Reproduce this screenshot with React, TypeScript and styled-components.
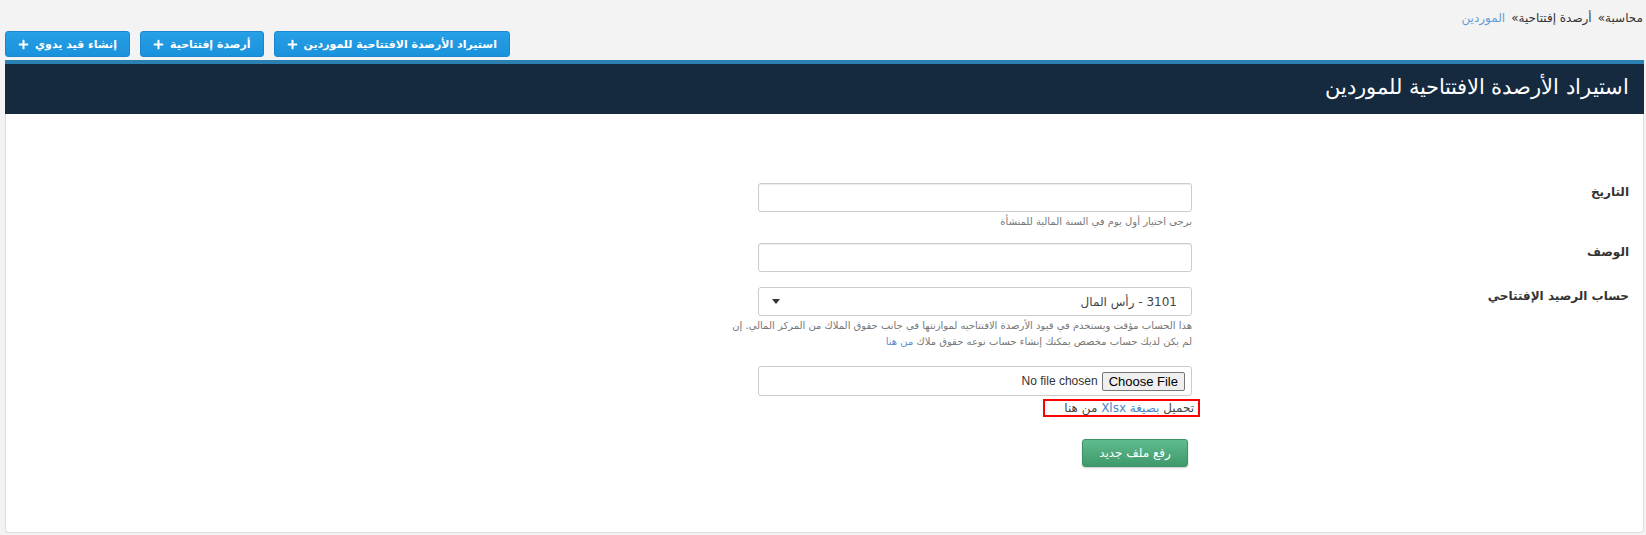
import styled, { createGlobalStyle } from "styled-components";
import { FaPlus } from "react-icons/fa";

const GlobalStyle = createGlobalStyle`
  html, body {
    margin: 0;
    padding: 0;
    background: #f3f3f3;
  }
  body {
    font-family: "DejaVu Sans", "Noto Sans", sans-serif;
    color: #333;
  }
`;

const Page = styled.div`
  direction: rtl;
  height: 535px;
  overflow: hidden;
  box-sizing: border-box;
`;

const Breadcrumb = styled.div`
  display: flex;
  align-items: center;
  gap: 6px;
  padding: 10px 3px 0;
  height: 16px;
  font-size: 12px;
  line-height: 16px;
  color: #333;
`;

const Crumb = styled.span<{ $active?: boolean }>`
  color: ${(p) => (p.$active ? "#5f9fd9" : "#333")};
`;

const ActionBar = styled.div`
  display: flex;
  justify-content: flex-end;
  gap: 10px;
  padding: 0 5px;
  margin-top: 5px;
`;

const ActionButton = styled.button`
  display: inline-flex;
  align-items: center;
  gap: 6px;
  height: 26px;
  padding: 0 12px;
  border: 1px solid #1a87cf;
  border-radius: 3px;
  background: linear-gradient(#26a0e6, #1b91dc);
  color: #fff;
  font-family: inherit;
  font-size: 11px;
  font-weight: bold;
  cursor: pointer;

  svg {
    width: 11px;
    height: 11px;
  }
`;

const Panel = styled.div`
  margin: 3px 2px 0 5px;
  height: 473px;
  display: flex;
  flex-direction: column;
  box-sizing: border-box;
`;

const PanelHeader = styled.div`
  height: 54px;
  box-sizing: border-box;
  border-top: 4px solid #2a80b1;
  background: #152a3f;
  display: flex;
  align-items: center;
  padding: 0 15px 4px;
`;

const PanelTitle = styled.h1`
  margin: 0;
  color: #fff;
  font-size: 21px;
  font-weight: 300;
`;

const PanelBody = styled.div`
  flex: 1;
  background: #fff;
  border: 1px solid #ddd;
  border-top: none;
  border-radius: 0 0 4px 4px;
  padding-top: 69px;
`;

const FormGroup = styled.div<{ $gap: number }>`
  display: flex;
  margin-bottom: ${(p) => p.$gap}px;
`;

const Label = styled.label`
  width: 451px;
  box-sizing: border-box;
  padding-right: 14px;
  font-size: 12px;
  font-weight: bold;
  line-height: 18px;
  color: #333;
`;

const Field = styled.div`
  width: 434px;
  display: flex;
  flex-direction: column;
  align-items: flex-start;
`;

const TextInput = styled.input`
  width: 100%;
  height: 29px;
  box-sizing: border-box;
  border: 1px solid #ccc;
  border-radius: 3px;
  box-shadow: inset 0 1px 1px rgba(0, 0, 0, 0.075);
  padding: 0 12px;
  font-family: inherit;
  font-size: 12px;
  outline: none;
`;

const SelectBox = styled.div`
  width: 100%;
  height: 29px;
  box-sizing: border-box;
  border: 1px solid #ccc;
  border-radius: 3px;
  display: flex;
  align-items: center;
  justify-content: space-between;
  padding: 0 14px 0 13px;
  font-size: 12px;
  color: #444;
`;

const Caret = styled.span`
  width: 0;
  height: 0;
  border-left: 4px solid transparent;
  border-right: 4px solid transparent;
  border-top: 5px solid #333;
`;

const Help = styled.div`
  margin-top: 2px;
  font-size: 10px;
  line-height: 16px;
  color: #777;
  white-space: nowrap;
`;

const HelpLink = styled.a`
  color: #5b8fcc;
  text-decoration: none;
`;

const FileBox = styled.div`
  width: 100%;
  height: 30px;
  box-sizing: border-box;
  border: 1px solid #ccc;
  border-radius: 3px;
  display: flex;
  align-items: center;
  gap: 4px;
  padding: 0 6px;
  font-family: "Liberation Sans", Arial, sans-serif;
  font-size: 13px;
`;

const ChooseButton = styled.span`
  direction: ltr;
  height: 19px;
  box-sizing: border-box;
  display: inline-flex;
  align-items: center;
  padding: 0 6px;
  border: 1px solid #767676;
  border-radius: 2px;
  background: #efefef;
  color: #000;
`;

const NoFile = styled.span`
  direction: ltr;
  font-size: 12px;
  color: #333;
`;

const TemplateNote = styled.div`
  width: 157px;
  height: 18px;
  box-sizing: border-box;
  margin: 3px -8px 0 0;
  border: 2px solid #f00;
  padding-right: 4px;
  font-size: 12px;
  line-height: 14px;
  color: #444;
  white-space: nowrap;
`;

const NoteLink = styled.a`
  color: #4c86c6;
  text-decoration: none;
`;

const SubmitButton = styled.button`
  margin: 22px 4px 0 0;
  width: 106px;
  height: 28px;
  border: 1px solid #3e9166;
  border-radius: 3px;
  background: linear-gradient(#60bb8e, #3e9a6b);
  box-shadow: 0 1px 2px rgba(0, 0, 0, 0.2);
  color: #fff;
  font-family: inherit;
  font-size: 12px;
  cursor: pointer;
`;

export default function App() {
  return (
    <Page>
      <GlobalStyle />
      <Breadcrumb>
        <Crumb>محاسبة»</Crumb>
        <Crumb>أرصدة إفتتاحية»</Crumb>
        <Crumb $active>الموردين</Crumb>
      </Breadcrumb>

      <ActionBar>
        <ActionButton>
          استيراد الأرصدة الافتتاحية للموردين <FaPlus />
        </ActionButton>
        <ActionButton>
          أرصدة إفتتاحية <FaPlus />
        </ActionButton>
        <ActionButton>
          إنشاء قيد يدوي <FaPlus />
        </ActionButton>
      </ActionBar>

      <Panel>
        <PanelHeader>
          <PanelTitle>استيراد الأرصدة الافتتاحية للموردين</PanelTitle>
        </PanelHeader>
        <PanelBody>
          <FormGroup $gap={13}>
            <Label>التاريخ</Label>
            <Field>
              <TextInput />
              <Help>برجى اختيار أول يوم في السنة المالية للمنشأة</Help>
            </Field>
          </FormGroup>

          <FormGroup $gap={15}>
            <Label>الوصف</Label>
            <Field>
              <TextInput />
            </Field>
          </FormGroup>

          <FormGroup $gap={16}>
            <Label>حساب الرصيد الإفتتاحي</Label>
            <Field>
              <SelectBox>
                <span>3101 - رأس المال</span>
                <Caret />
              </SelectBox>
              <Help>
                هذا الحساب مؤقت ويستخدم في قيود الأرصدة الافتتاحيه لموازنتها في جانب حقوق الملاك من المركز المالي. إن
                <br />
                لم يكن لديك حساب مخصص يمكنك إنشاء حساب نوعه حقوق ملاك <HelpLink>من هنا</HelpLink>
              </Help>
            </Field>
          </FormGroup>

          <FormGroup $gap={0}>
            <Label />
            <Field>
              <FileBox>
                <ChooseButton>Choose File</ChooseButton>
                <NoFile>No file chosen</NoFile>
              </FileBox>
              <TemplateNote>
                تحميل <NoteLink>بصيغة Xlsx</NoteLink> من هنا
              </TemplateNote>
              <SubmitButton>رفع ملف جديد</SubmitButton>
            </Field>
          </FormGroup>
        </PanelBody>
      </Panel>
    </Page>
  );
}
